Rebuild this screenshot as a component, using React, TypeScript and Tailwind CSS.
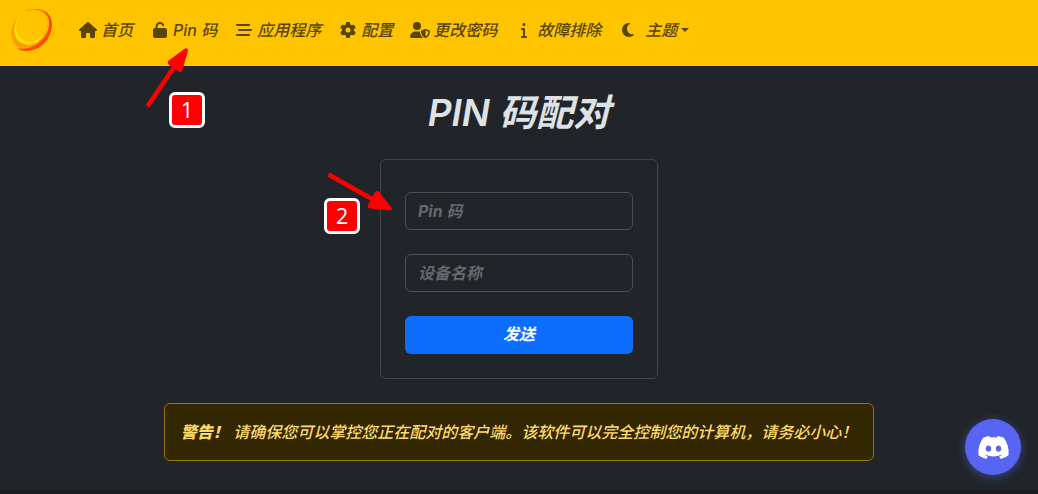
import type { ReactNode } from "react";
import {
  FaBarsStaggered,
  FaDiscord,
  FaGear,
  FaHouse,
  FaInfo,
  FaMoon,
  FaUnlock,
  FaUserShield,
} from "react-icons/fa6";

function NavLink({ icon, children }: { icon: ReactNode; children: ReactNode }) {
  return (
    <a href="#" className="flex items-center gap-1 whitespace-nowrap">
      <span className="flex w-[18px] justify-center [&>svg]:shrink-0">{icon}</span>
      <span>{children}</span>
    </a>
  );
}

function Logo() {
  return (
    <svg viewBox="0 0 42 44" className="h-11 w-[42px]" aria-hidden="true">
      <ellipse cx="19" cy="21" rx="17" ry="21.500" transform="rotate(37 19 21)" fill="#ff9d00" />
      <ellipse cx="20.500" cy="18.500" rx="16" ry="19.500" transform="rotate(37 20.500 18.500)" fill="#ffdf00" />
      <ellipse cx="21.500" cy="16.500" rx="15" ry="18" transform="rotate(37 21.500 16.500)" fill="#ffc400" />
      <path
        d="M15 2.500C28-2 41 3 41 16C41 31 29 43 15 43C11 43 8 42 7 40C13 42 23 40 30 33C36 27 38.500 20 38 13C37 4 28-0.500 15 2.500Z"
        fill="#ff4800"
      />
      <path d="M15 2.500C27-0.500 36 4 37 12C38 19 34 28 28 33" fill="none" stroke="#ff9d00" strokeWidth="1" />
    </svg>
  );
}

function Field({ label }: { label: string }) {
  return (
    <input
      type="text"
      aria-label={label}
      placeholder={label}
      className="h-[38px] w-full min-w-0 rounded-md border border-[#495057] bg-transparent px-3 text-base font-bold italic text-[#dee2e6] placeholder:text-[#65696e]"
    />
  );
}

function Marker({ children }: { children: ReactNode }) {
  return (
    <span className="flex size-9 items-center justify-center rounded-md border-[3px] border-white bg-[#ff0000] pb-0.5 font-['Open_Sans',sans-serif] text-[22px] font-normal not-italic leading-none text-white">
      {children}
    </span>
  );
}

export default function App() {
  return (
    <div className="relative flex min-h-screen flex-col border-b-4 border-[#1b1b20] bg-[#212529] font-['Inter','Noto_Sans_CJK_SC',sans-serif] text-base font-medium italic text-[#dee2e6]">
      <header className="flex h-[66px] items-center bg-[#ffc400] pb-1.5 pl-[11px] text-[#594500]">
        <a href="#" aria-label="Sunshine" className="shrink-0">
          <Logo />
        </a>
        <nav className="ml-[26px] flex items-center gap-[18px]">
          <NavLink icon={<FaHouse size={18} />}>首页</NavLink>
          <NavLink icon={<FaUnlock size={16} />}>Pin 码</NavLink>
          <NavLink icon={<FaBarsStaggered size={16} />}>应用程序</NavLink>
          <NavLink icon={<FaGear size={16} />}>配置</NavLink>
          <NavLink icon={<FaUserShield size={20} />}>更改密码</NavLink>
          <NavLink icon={<FaInfo size={16} />}>故障排除</NavLink>
          <button type="button" className="flex items-center whitespace-nowrap italic">
            <span className="flex w-[18px] justify-center"><FaMoon size={16} /></span>
            <span className="ml-2">主题</span>
            <span className="ml-1 border-x-4 border-t-4 border-x-transparent border-t-current" />
          </button>
        </nav>
      </header>

      <main className="flex flex-col items-center">
        <h1 className="mt-6 text-[37px] font-semibold leading-[46px]">PIN 码配对</h1>
        <form className="mt-[23px] flex w-[278px] flex-col gap-6 rounded-md border border-[#42464a] px-6 pb-6 pt-8">
          <Field label="Pin 码" />
          <Field label="设备名称" />
          <button type="button" className="h-[38px] rounded-md bg-[#0d6efd] pb-0.5 font-bold italic text-white">
            发送
          </button>
        </form>
        <p className="mt-6 w-fit rounded-md border border-[#997404] bg-[#332701] p-4 leading-6 text-[#ffda6a]">
          <b className="font-black">警告！</b> 请确保您可以掌控您正在配对的客户端。该软件可以完全控制您的计算机，请务必小心！
        </p>
      </main>

      <a
        href="#"
        aria-label="Discord"
        className="absolute bottom-[15px] right-[17px] flex size-14 items-center justify-center rounded-full bg-[#5865f2] not-italic text-white shadow-[0_2px_10px_rgba(88,101,242,0.5)]"
      >
        <FaDiscord size={33} />
      </a>

      <div className="absolute left-[169px] top-[92px]"><Marker>1</Marker></div>
      <div className="absolute left-[324px] top-[198px]"><Marker>2</Marker></div>
      <svg viewBox="0 0 44 60" className="absolute left-[145px] top-[48px] h-[60px] w-11" aria-hidden="true">
        <path d="M2.500 58.500L29 19" stroke="#ff0000" strokeWidth="4.500" />
        <path d="M40 0.500Q43-0.500 43 3L37 23Q36 25 34 24L24 17Q22 15 23 13Z" fill="#ff0000" />
      </svg>
      <svg viewBox="0 0 68 42" className="absolute left-[326px] top-[171px] h-[42px] w-[68px]" aria-hidden="true">
        <path d="M2.500 3.500L46 28" stroke="#ff0000" strokeWidth="4.500" />
        <path d="M49 21Q51 19 53 21L65 36Q67 39 64 39.500L44 37.500Q41 37 42 34Z" fill="#ff0000" />
      </svg>
    </div>
  );
}
